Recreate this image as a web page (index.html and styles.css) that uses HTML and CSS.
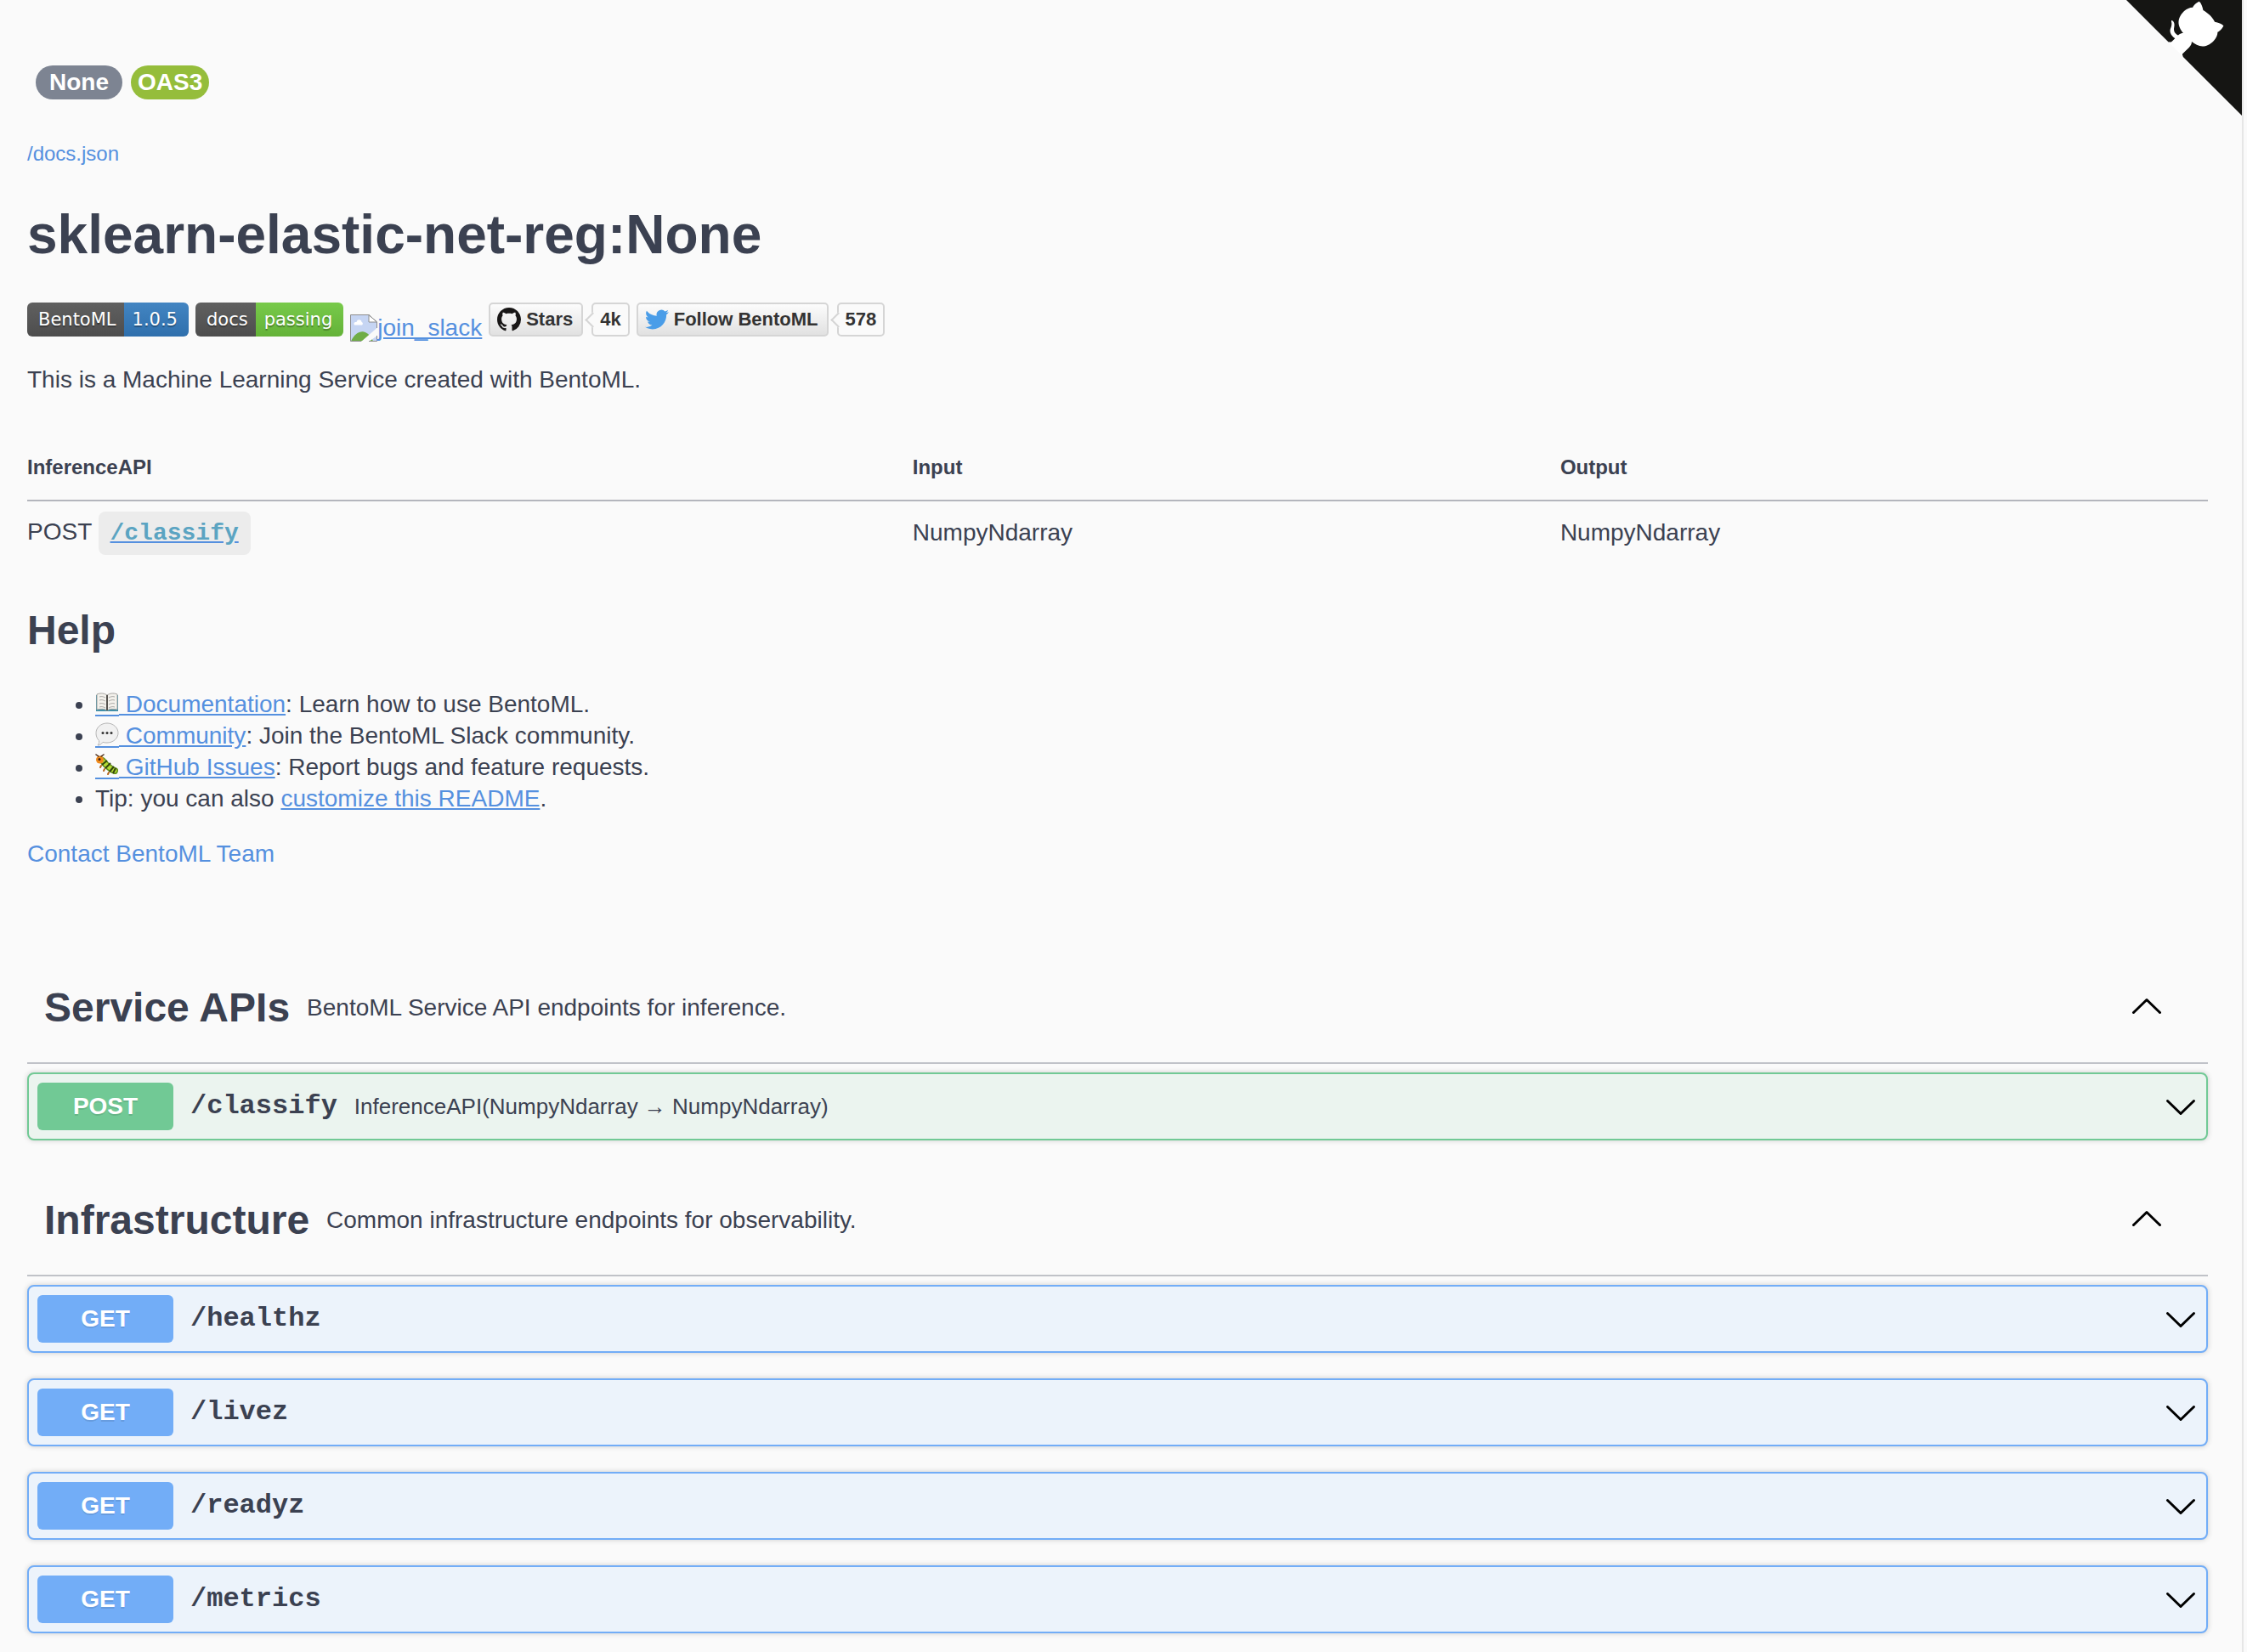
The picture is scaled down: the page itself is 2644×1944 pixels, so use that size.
FILE: index.html
```html
<!DOCTYPE html>
<html lang="en">
<head>
<meta charset="utf-8">
<title>sklearn-elastic-net-reg:None</title>
<link rel="stylesheet" href="styles.css">
</head>
<body>
<svg class="defs" aria-hidden="true">
  <symbol id="chevron-up" viewBox="0 0 40 40"><path d="M4.5 25.5 20 10.500 35.500 25.500" fill="none" stroke="#000" stroke-width="3" stroke-linecap="round" stroke-linejoin="round"/></symbol>
  <symbol id="chevron-down" viewBox="0 0 40 40"><path d="M4.500 13.500 20 28.500 35.500 13.500" fill="none" stroke="#000" stroke-width="3" stroke-linecap="round" stroke-linejoin="round"/></symbol>
</svg>
<div class="page">
  <a class="corner" href="#" aria-label="View source on GitHub">
    <svg width="160" height="160" viewBox="0 0 250 250" aria-hidden="true">
      <path fill="#151513" d="M0,0 L115,115 L130,115 L142,142 L250,250 L250,0 Z"/>
      <path fill="#fff" d="M128.3,109.0 C113.8,99.7 119.0,89.6 119.0,89.6 C122.0,82.7 120.5,78.6 120.5,78.6 C119.2,72.0 123.4,76.3 123.4,76.3 C127.3,80.9 125.5,87.3 125.5,87.3 C122.9,97.6 130.6,101.9 134.4,103.2"/>
      <path fill="#fff" d="M115.0,115.0 C114.9,115.1 118.7,116.5 119.8,115.4 L133.7,101.6 C136.9,99.2 139.9,98.4 142.2,98.6 C133.8,88.0 127.5,74.4 143.8,58.0 C148.5,53.4 154.0,51.2 159.7,51.0 C160.3,49.4 163.2,43.6 171.4,40.1 C171.4,40.1 176.1,42.5 178.8,56.2 C183.1,58.6 187.2,61.8 190.9,65.4 C194.5,69.0 197.7,73.2 200.1,77.6 C213.8,80.2 216.3,84.9 216.3,84.9 C212.7,93.1 206.9,96.0 205.4,96.6 C205.1,102.4 203.0,107.8 198.3,112.5 C181.9,128.9 168.3,122.5 157.7,114.1 C157.9,116.9 156.7,120.9 152.7,124.9 L141.0,136.5 C139.8,137.7 141.6,141.9 141.8,141.8 Z"/>
    </svg>
  </a>

  <header class="info">
    <div class="tags">
      <span class="tag tag-version">None</span>
      <span class="tag tag-oas">OAS3</span>
    </div>
    <a class="spec-link" href="#">/docs.json</a>
    <h1 class="title">sklearn-elastic-net-reg:None</h1>

    <div class="badges">
      <a class="shield" href="#"><span class="shield-label">BentoML</span><span class="shield-value blue">1.0.5</span></a>
      <a class="shield" href="#"><span class="shield-label">docs</span><span class="shield-value green">passing</span></a>
      <a class="missing" href="#"><svg width="32" height="32" viewBox="0 0 32 32" aria-hidden="true">
        <path d="M.5.5H22L31.500 9V31.500H.5Z" fill="#c6d5f3"/>
        <path d="M5 12.500c-1.500-3 1-4 2.500-3.500 1-4 6-3 6 0 2 .5 1.500 3 .5 3.500Z" fill="#fff"/>
        <path d="M1 31.500C5 23 11 19.500 16 20.500c5 1 9 6 11 11Z" fill="#6fad47"/>
        <path d="M13 32 32 15.500V25L22 32Z" fill="#fafafa"/>
        <path d="M22 .5V9H31.500Z" fill="#fff" stroke="#8e8e8e"/>
        <path d="M13 31.500H.5V.5H22L31.500 9v7M22 31.500h9.500V25" fill="none" stroke="#8e8e8e"/>
      </svg><span class="missing-alt">join_slack</span></a>
      <a class="social" href="#"><span class="social-name"><svg width="28" height="28" viewBox="0 0 16 16" aria-hidden="true"><path fill="#181616" d="M8 0C3.580 0 0 3.580 0 8c0 3.540 2.290 6.530 5.470 7.590.4.070.550-.170.550-.380 0-.190-.010-.820-.010-1.490-2.010.370-2.530-.490-2.690-.940-.090-.230-.480-.940-.820-1.130-.280-.150-.680-.520-.010-.530.630-.010 1.080.580 1.230.820.720 1.210 1.870.870 2.330.660.070-.520.280-.870.510-1.070-1.780-.2-3.640-.890-3.640-3.950 0-.870.310-1.590.820-2.150-.080-.2-.360-1.020.080-2.120 0 0 .670-.210 2.200.820.640-.180 1.320-.270 2-.270s1.360.090 2 .270c1.530-1.040 2.200-.820 2.200-.820.440 1.100.160 1.920.080 2.120.510.560.820 1.270.820 2.150 0 3.070-1.870 3.750-3.650 3.950.290.250.540.730.540 1.480 0 1.070-.010 1.930-.010 2.200 0 .210.150.460.550.380A8.010 8.010 0 0 0 16 8c0-4.420-3.580-8-8-8Z"/></svg>Stars</span><span class="social-count">4k</span></a>
      <a class="social" href="#"><span class="social-name"><svg width="28" height="28" viewBox="0 0 24 24" aria-hidden="true"><path fill="#4a9de8" d="M23.950 4.570a10 10 0 0 1-2.820.770 4.960 4.960 0 0 0 2.160-2.720c-.950.550-2 .950-3.130 1.180a4.920 4.920 0 0 0-8.380 4.480C7.690 8.100 4.070 6.130 1.640 3.160a4.820 4.820 0 0 0-.670 2.480c0 1.710.870 3.210 2.190 4.100a4.900 4.900 0 0 1-2.230-.620v.060a4.920 4.920 0 0 0 3.950 4.830 5 5 0 0 1-2.210.080 4.940 4.940 0 0 0 4.600 3.420A9.870 9.870 0 0 1 0 19.540a14 14 0 0 0 7.550 2.210c9.050 0 14-7.500 14-13.980 0-.210 0-.420-.020-.630a9.940 9.940 0 0 0 2.420-2.570Z"/></svg>Follow BentoML</span><span class="social-count">578</span></a>
    </div>

    <p class="text">This is a Machine Learning Service created with BentoML.</p>

    <table class="apis">
      <thead><tr><th scope="col" class="first">InferenceAPI</th><th scope="col">Input</th><th scope="col">Output</th></tr></thead>
      <tbody><tr><td>POST <a href="#"><code>/classify</code></a></td><td>NumpyNdarray</td><td>NumpyNdarray</td></tr></tbody>
    </table>

    <h2 class="help">Help</h2>
    <ul class="links">
      <li><a href="#"><svg class="emoji" width="28" height="30" viewBox="0 0 28 28" aria-hidden="true">
        <path d="M1 5h26v19H1Z" fill="#3f8fa8"/><path d="M2 4c5-2 9-1 12 1 3-2 7-3 12-1v18c-5-1-9-1-12 1-3-2-7-2-12-1Z" fill="#f3f1ec" stroke="#a5a39f"/>
        <path d="M14 5v18" stroke="#55524e" stroke-width="2"/><path d="M5 7c3-1 5 0 7 1M5 11c3-1 5 0 7 1M5 15c3-1 5 0 7 1M5 19c3-1 5 0 7 1M23 7c-3-1-5 0-7 1M23 11c-3-1-5 0-7 1M23 15c-3-1-5 0-7 1M23 19c-3-1-5 0-7 1" stroke="#aaa8a5" fill="none"/>
      </svg> Documentation</a>: Learn how to use BentoML.</li>
      <li><a href="#"><svg class="emoji" width="28" height="30" viewBox="0 0 28 28" aria-hidden="true">
        <path d="M14 1c7 0 13 5 13 11.500S21 24 14 24c-2 0-3 0-5-.7C7 26 5 27 3 27c1-1 2-3 1.500-5.500C2 19 1 16 1 12.500 1 6 7 1 14 1Z" fill="#f1f1f1" stroke="#b5b5b5"/>
        <circle cx="9" cy="12.500" r="1.500" fill="#333"/><circle cx="14" cy="12.500" r="1.500" fill="#333"/><circle cx="19" cy="12.500" r="1.500" fill="#333"/>
      </svg> Community</a>: Join the BentoML Slack community.</li>
      <li><a href="#"><svg class="emoji" width="28" height="30" viewBox="0 0 28 28" aria-hidden="true">
        <path d="M7 7c3 1 4 5 7 7s5 5 9 6" stroke="#5f8f17" stroke-width="8" stroke-linecap="round" fill="none"/>
        <path d="M7 7c3 1 4 5 7 7s5 5 9 6" stroke="#b4da35" stroke-width="5" stroke-linecap="round" fill="none"/>
        <path d="m8 13 6-5M12 17l6-6M17 21l5-6M21 23l3-6" stroke="#33450e" stroke-width="2"/>
        <path d="m7 14-1 2M11 18l-1 2M16 22l-1 2" stroke="#b5651d" stroke-width="2" stroke-linecap="round"/>
        <circle cx="5.500" cy="7" r="4.500" fill="#ef8a1d"/><circle cx="5" cy="6.500" r="1.500" fill="#402010"/><path d="M4 3 1 1M7 3l3-2" stroke="#402010" stroke-width="1.500" stroke-linecap="round"/>
      </svg> GitHub Issues</a>: Report bugs and feature requests.</li>
      <li>Tip: you can also <a href="#">customize this README</a>.</li>
    </ul>
    <a class="contact" href="#">Contact BentoML Team</a>
  </header>

  <main>
    <section class="group">
      <div class="group-head">
        <h2 class="group-name">Service APIs</h2>
        <p class="group-text">BentoML Service API endpoints for inference.</p>
        <button class="toggle" type="button" aria-label="Collapse Service APIs"><svg width="40" height="40"><use href="#chevron-up"/></svg></button>
      </div>
      <div class="ops">
        <button class="op post" type="button"><span class="method">POST</span><span class="path">/classify</span><span class="summary">InferenceAPI(NumpyNdarray → NumpyNdarray)</span><svg class="arrow" width="40" height="40"><use href="#chevron-down"/></svg></button>
      </div>
    </section>
    <section class="group">
      <div class="group-head">
        <h2 class="group-name">Infrastructure</h2>
        <p class="group-text">Common infrastructure endpoints for observability.</p>
        <button class="toggle" type="button" aria-label="Collapse Infrastructure"><svg width="40" height="40"><use href="#chevron-up"/></svg></button>
      </div>
      <div class="ops">
        <button class="op get" type="button"><span class="method">GET</span><span class="path">/healthz</span><svg class="arrow" width="40" height="40"><use href="#chevron-down"/></svg></button>
        <button class="op get" type="button"><span class="method">GET</span><span class="path">/livez</span><svg class="arrow" width="40" height="40"><use href="#chevron-down"/></svg></button>
        <button class="op get" type="button"><span class="method">GET</span><span class="path">/readyz</span><svg class="arrow" width="40" height="40"><use href="#chevron-down"/></svg></button>
        <button class="op get" type="button"><span class="method">GET</span><span class="path">/metrics</span><svg class="arrow" width="40" height="40"><use href="#chevron-down"/></svg></button>
      </div>
    </section>
  </main>
</div>
</body>
</html>
```

FILE: styles.css
```css
* { box-sizing: border-box; }

body {
  margin: 0;
  background: #fafafa;
  color: #3b4151;
  font: 28px/36px "Liberation Sans", Arial, sans-serif;
}

h1, h2, p, ul { margin: 0; }
a { color: #5590df; }
button { font: inherit; color: inherit; cursor: pointer; }
svg { display: block; flex: none; }
.defs { position: absolute; width: 0; height: 0; }

.page {
  position: relative;
  overflow: hidden;
  min-height: 100vh;
  margin-right: 4px;
  padding: 77px 40px 24px 32px;
  border-right: 2px solid #e6e6e6;
}

.corner { position: absolute; top: -24px; right: 0; }

.info { display: flex; flex-direction: column; align-items: flex-start; }

.tags { display: flex; gap: 10px; margin-left: 10px; }
.tag {
  border-radius: 20px;
  color: #fff;
  font-weight: bold;
  line-height: 40px;
}
.tag-version { padding: 0 16px; background: #7d8492; }
.tag-oas { padding: 0 8px; background: #95bd3b; }

.spec-link {
  margin-top: 48px;
  font-size: 24px;
  line-height: 32px;
  text-decoration: none;
}

.title { margin-top: 43px; font-size: 64px; line-height: 72px; }

.badges { display: flex; gap: 8px; margin-top: 44px; }
.shield {
  display: flex;
  height: 40px;
  overflow: hidden;
  border-radius: 6px;
  color: #fff;
  font: 21px/40px "DejaVu Sans", Verdana, sans-serif;
  text-decoration: none;
  text-shadow: 0 2px 1px rgba(1, 1, 1, 0.3);
}
.shield-label { padding: 0 9px 0 13px; background: linear-gradient(#606060, #4d4d4d); }
.shield-value { padding: 0 13px 0 10px; }
.blue { background: linear-gradient(#4385c2, #2f6fac); }
.green { background: linear-gradient(#78ca4a, #64b238); }

.missing { display: flex; align-items: flex-start; height: 40px; padding-top: 14px; }
.missing-alt { line-height: 32px; text-decoration: underline; }

.social {
  display: flex;
  gap: 10px;
  color: #333;
  font-size: 22px;
  font-weight: bold;
  line-height: 36px;
  text-decoration: none;
}
.social-name, .social-count {
  height: 40px;
  border: 2px solid #d5d5d5;
  border-radius: 5px;
}
.social-name {
  display: flex;
  align-items: center;
  gap: 6px;
  padding: 0 10px 0 8px;
  background: linear-gradient(#fcfcfc, #e1e1e1);
}
.social-count { position: relative; padding: 0 8px; background: #fafafa; }
.social-count::before {
  content: "";
  position: absolute;
  left: -7px;
  top: 12px;
  width: 11px;
  height: 11px;
  border: solid #d5d5d5;
  border-width: 0 0 2px 2px;
  background: #fafafa;
  transform: rotate(45deg);
}

.text { margin-top: 33px; }

.apis { width: 100%; margin-top: 59px; border-collapse: collapse; text-align: left; }
.apis th {
  width: 29.7%;
  padding: 12px 0 24px;
  border-bottom: 2px solid #b4b6bd;
  font-size: 24px;
  line-height: 28px;
}
.apis .first { width: 40.6%; }
.apis td { padding: 18px 0; }
.apis code {
  padding: 10px 14px;
  border-radius: 8px;
  background: #ececec;
  color: #5ba4c2;
  font: bold 28px/36px "Liberation Mono", "Courier New", monospace;
}

.help { margin-top: 50px; font-size: 48px; line-height: 56px; }

.links { margin-top: 40px; padding-left: 80px; line-height: 37px; }
.emoji {
  display: inline-block;
  border-bottom: 2px solid #5590df;
  vertical-align: -5px;
}

.contact { margin-top: 29px; text-decoration: none; }

main { margin-top: 99px; }
.group + .group { margin-top: 30px; }
.group-head {
  display: flex;
  align-items: center;
  gap: 20px;
  height: 130px;
  padding: 0 52px 0 20px;
  border-bottom: 2px solid #c0c2c8;
}
.group-name { font-size: 48px; line-height: 56px; }
.group-text { flex: 1; }
.toggle { padding: 0; border: 0; background: none; }

.ops { display: flex; flex-direction: column; gap: 30px; margin-top: 10px; }
.op {
  display: flex;
  align-items: center;
  gap: 20px;
  height: 80px;
  padding: 10px;
  border: 2px solid;
  border-radius: 8px;
  box-shadow: 0 0 6px rgba(0, 0, 0, 0.19);
}
.post { border-color: #71c995; background: #ebf4ef; }
.get { border-color: #72adf7; background: #ecf3fb; }
.method {
  width: 160px;
  border-radius: 6px;
  color: #fff;
  font-weight: bold;
  line-height: 56px;
  text-align: center;
  text-shadow: 0 2px 0 rgba(0, 0, 0, 0.1);
}
.post .method { background: #71c995; }
.get .method { background: #72adf7; }
.path { font: bold 32px/36px "Liberation Mono", "Courier New", monospace; }
.summary { font-size: 26px; }
.arrow { margin-left: auto; }
```
